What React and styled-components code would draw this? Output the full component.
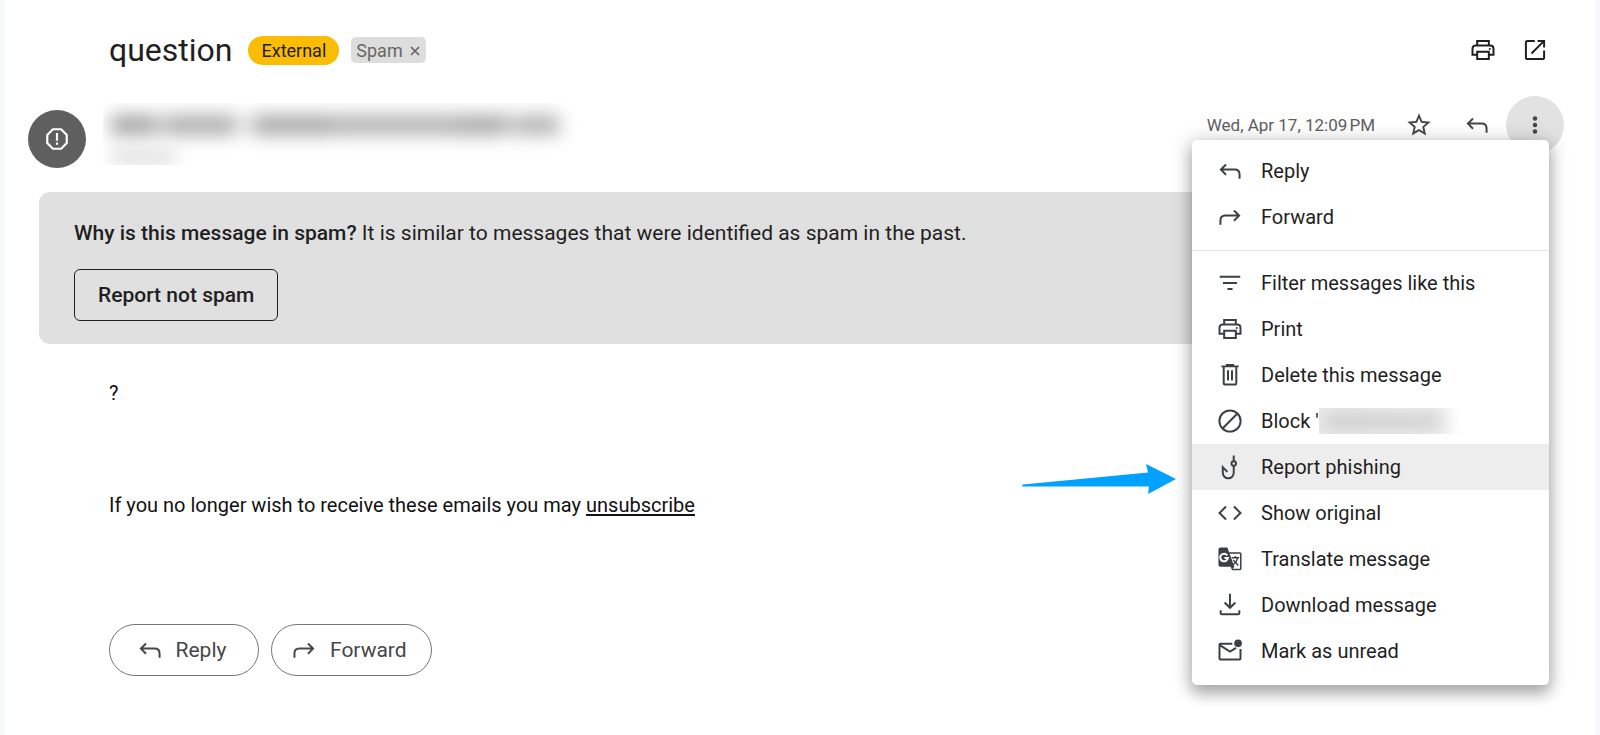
import React from 'react';
import styled, { createGlobalStyle } from 'styled-components';

const GlobalStyle = createGlobalStyle`
  * { box-sizing: border-box; }
  body { margin: 0; background: #f6f8fc; font-family: Roboto, "Liberation Sans", sans-serif; color: #1f1f1f; }
  button { font-family: inherit; color: inherit; background: none; border: 0; padding: 0; cursor: pointer; }
  svg { display: block; flex: none; fill: currentColor; }
`;

const Panel = styled.article`
  min-height: 100vh;
  margin: 0 5px;
  background: #fff;
`;

const SubjectBar = styled.header`
  display: flex;
  align-items: center;
  height: 96px;
  padding: 4px 46px 0 104px;
`;

const Subject = styled.h1`
  margin: 0 16px 0 0;
  font-size: 32px;
  line-height: 40px;
  font-weight: 400;
`;

const Chip = styled.span`
  display: flex;
  align-items: center;
  gap: 7px;
  height: ${(p) => (p.$external ? '29px' : '26px')};
  margin-right: 12px;
  padding: ${(p) => (p.$external ? '0 13px' : '0 6px 0 5px')};
  border-radius: ${(p) => (p.$external ? '15px' : '5px')};
  background: ${(p) => (p.$external ? '#fbbc04' : '#ddd')};
  color: ${(p) => (p.$external ? '#1f1f1f' : '#666')};
  font-size: 18px;
`;

const RemoveButton = styled.button`
  padding-top: 2px;
`;

const Tools = styled.div`
  display: flex;
  gap: 24px;
  margin-left: auto;
`;

const IconButton = styled.button`
  display: grid;
  place-items: center;
  width: ${(p) => p.$size || 28}px;
  height: ${(p) => p.$size || 28}px;
  border-radius: 50%;
  background: ${(p) => (p.$active ? '#e2e2e2' : 'transparent')};
  color: ${(p) => (p.$dark ? '#1f1f1f' : '#444746')};
`;

const SenderRow = styled.section`
  display: flex;
  align-items: flex-start;
  padding: 0 31px 0 23px;
`;

const Avatar = styled.div`
  display: grid;
  place-items: center;
  width: 58px;
  height: 58px;
  margin: 14px 17px 0 0;
  border-radius: 50%;
  background: #5f5f5f;
  color: #fff;
`;

const Redacted = styled.div`
  overflow: hidden;
  display: flex;
  flex-direction: column;
  gap: 16px;
  width: 480px;
  height: 62px;
  margin-top: 7px;
  padding: 12px 8px 0;
`;

const RedactedLine = styled.div`
  display: flex;
  filter: blur(9px);
`;

const Smudge = styled.span`
  width: ${(p) => p.$width}px;
  height: ${(p) => p.$height}px;
  background: ${(p) => p.$tone};
`;

const Meta = styled.div`
  position: relative;
  display: flex;
  align-items: center;
  gap: 30px;
  height: 58px;
  margin-left: auto;
`;

const DateText = styled.time`
  font-size: 17px;
  color: #5e5e5e;
`;

const MoreSlot = styled.div`
  margin-left: -15px;
`;

const Menu = styled.ul`
  position: absolute;
  z-index: 2;
  top: 44px;
  right: 15px;
  width: 357px;
  margin: 0;
  padding: 8px 0 11px;
  list-style: none;
  border-radius: 5px;
  background: #fff;
  box-shadow: 0 8px 14px 1px rgba(0, 0, 0, 0.24), 0 2px 20px 2px rgba(0, 0, 0, 0.18);
`;

const Divider = styled.li`
  height: 1px;
  margin: 10px 0 9px;
  background: #e4e4e4;
`;

const MenuItem = styled.li`
  position: relative;
  background: ${(p) => (p.$active ? '#ededed' : 'transparent')};
`;

const MenuButton = styled.button`
  display: flex;
  align-items: center;
  gap: 17px;
  width: 100%;
  height: 46px;
  padding: 0 24px;
  font-size: 20px;
  text-align: left;
  & > svg { color: #3c4043; }
`;

const MenuLabel = styled.span`
  display: flex;
  align-items: center;
`;

const BlockName = styled.span`
  overflow: hidden;
  width: 142px;
  height: 26px;
  padding: 6px 16px 0 4px;
  background: linear-gradient(90deg, #ececec, #f2f2f2 85%, #fff);
`;

const Pointer = styled.svg`
  position: absolute;
  right: 100%;
  top: 20px;
  margin-right: 16px;
  fill: #00a1ff;
`;

const Banner = styled.section`
  margin: 24px 80px 0 34px;
  padding: 26px 35px 23px;
  border-radius: 11px;
  background: #e0e0e0;
`;

const BannerText = styled.p`
  margin: 0 0 21px;
  font-size: 21px;
  line-height: 30px;
  strong { font-weight: 500; }
`;

const NotSpamButton = styled.button`
  height: 52px;
  padding: 0 23px;
  border: 1px solid #1f1f1f;
  border-radius: 6px;
  font-size: 21px;
  font-weight: 500;
`;

const Body = styled.section`
  padding: 34px 104px 0;
  font-size: 20px;
  line-height: 30px;
  color: #111;
`;

const Paragraph = styled.p`
  margin: 0 0 82px;
`;

const Link = styled.a`
  color: inherit;
  text-underline-offset: 2px;
`;

const Actions = styled.footer`
  display: flex;
  gap: 12px;
  padding: 22px 104px 60px;
`;

const ActionButton = styled.button`
  display: flex;
  align-items: center;
  justify-content: center;
  gap: 12px;
  min-width: 150px;
  height: 52px;
  padding: 0 24px 0 18px;
  border: 1px solid #747775;
  border-radius: 26px;
  color: #444746;
  font-size: 21px;
`;

const Icon = ({ size = 28, children }) => (
  <svg width={size} height={size} viewBox="0 0 24 24" aria-hidden="true">{children}</svg>
);

const stroke = { fill: 'none', stroke: 'currentColor', strokeWidth: 1.7 };

const ReplyIcon = () => (
  <Icon><path {...stroke} d="M8.6 6.4 4.2 10.8 8.6 15.2M4.4 10.8H16Q20.2 10.8 20.2 15V18.6" /></Icon>
);
const ForwardIcon = () => (
  <Icon><path {...stroke} d="M15.4 6.4 19.8 10.8 15.4 15.2M19.6 10.8H8Q3.8 10.8 3.8 15V18.6" /></Icon>
);
const PrintIcon = () => (
  <Icon>
    <path {...stroke} d="M7 8.2V4.2H17V8.2M7 16H3V11Q3 8.2 5.8 8.2H18.2Q21 8.2 21 11V16H17M7 13.4H17V19.8H7Z" />
    <circle cx="17.8" cy="11.2" r="0.9" />
  </Icon>
);
const OpenIcon = () => (
  <Icon><path {...stroke} d="M11.8 4.2H5.6Q4.2 4.2 4.2 5.6V18.4Q4.2 19.8 5.6 19.8H18.4Q19.8 19.8 19.8 18.4V12.4M14.2 4.2H19.8V9.8M19.8 4.2 9 15" /></Icon>
);
const StarIcon = () => (
  <Icon><path d="m22 9.24-7.19-.62L12 2 9.19 8.63 2 9.24l5.46 4.73L5.82 21 12 17.27 18.18 21l-1.63-7.03L22 9.24zM12 15.4l-3.76 2.27 1-4.28-3.32-2.88 4.38-.38L12 6.1l1.71 4.04 4.38.38-3.32 2.88 1 4.28L12 15.4z" /></Icon>
);
const MoreIcon = () => (
  <Icon><circle cx="12" cy="6.4" r="1.9" /><circle cx="12" cy="12" r="1.9" /><circle cx="12" cy="17.6" r="1.9" /></Icon>
);
const SpamIcon = () => (
  <Icon size={26}>
    <path {...stroke} strokeWidth="2" d="M8.2 3H15.8L21 8.2V15.8L15.8 21H8.2L3 15.8V8.2Z" />
    <path d="M11 6.5h2v7h-2zM11 15.2h2v2h-2z" />
  </Icon>
);
const FilterIcon = () => (
  <Icon><path d="M3.2 5.8h17.6v1.8H3.2zM6 11.1h12v1.8H6zM9.8 16.2h4.4v1.8H9.8z" /></Icon>
);
const TrashIcon = () => (
  <Icon><path {...stroke} d="M4.6 4.6H19.4M9.3 4.2V3.4H14.7V4.2M6.6 4.8V18.8Q6.6 20.2 8 20.2H16Q17.4 20.2 17.4 18.8V4.8M10.3 8V16.8M13.7 8V16.8" /></Icon>
);
const BlockIcon = () => (
  <Icon><path {...stroke} d="M5.4 18.6 18.6 5.4" /><circle {...stroke} cx="12" cy="12" r="9.1" /></Icon>
);
const HookIcon = () => (
  <Icon>
    <circle {...stroke} cx="15.2" cy="9" r="1.9" />
    <path {...stroke} d="M15.2 2.2V7.1M15.2 10.9V17A4.2 4.2 0 0 1 5.8 17V12.2L9.8 16.2" />
  </Icon>
);
const CodeIcon = () => (
  <Icon><path {...stroke} d="M8.6 6.4 3 12 8.6 17.6M15.4 6.4 21 12 15.4 17.6" /></Icon>
);
const TranslateIcon = () => (
  <Icon>
    <path d="M3.8 2.2H9.8L11.2 6.2H20.4Q21.9 6.2 21.9 7.7V20.2Q21.9 21.7 20.4 21.7H13.8L12.5 18.6H3.8Q2.1 18.6 2.1 17V3.9Q2.1 2.2 3.8 2.2ZM11.7 7.5 15.7 18.7 14.3 20.4H20.6V7.5Z" fillRule="evenodd" />
    <path {...stroke} stroke="#fff" d="M9.7 8.9A3.3 3.3 0 1 0 10.2 11.2H7.3" />
    <path {...stroke} strokeWidth="1.2" d="M13.4 10.9H19.8M16.6 9.4V10.9M18.6 11.1Q17.8 14.6 14.8 16.8M14.8 12.8 19.2 17.6" />
  </Icon>
);
const DownloadIcon = () => (
  <Icon><path {...stroke} d="M12 2.4V14.2M7.4 9.8 12 14.4 16.6 9.8M4 16.6V19Q4 20 5 20H19Q20 20 20 19V16.6" /></Icon>
);
const UnreadIcon = () => (
  <Icon>
    <path {...stroke} d="M14 5.7H3.8Q3 5.7 3 6.5V18.5Q3 19.3 3.8 19.3H20.2Q21 19.3 21 18.5V10.2M3.2 7 12 12.6 17.2 9.4" />
    <circle cx="18.9" cy="5.4" r="3.3" />
  </Icon>
);
const CloseIcon = () => (
  <svg width="10" height="10" viewBox="0 0 10 10" aria-hidden="true"><path {...stroke} d="M1 1 9 9M9 1 1 9" /></svg>
);

const senderSmudges = [
  { width: 44, tone: '#a4a4a4' },
  { width: 12, tone: '#d0d0d0' },
  { width: 68, tone: '#acacac' },
  { width: 18, tone: '#ececec' },
  { width: 78, tone: '#a8a8a8' },
  { width: 126, tone: '#b2b2b2' },
  { width: 48, tone: '#a8a8a8' },
  { width: 12, tone: '#cccccc' },
  { width: 42, tone: '#b2b2b2' },
];

const quickItems = [
  { label: 'Reply', icon: <ReplyIcon /> },
  { label: 'Forward', icon: <ForwardIcon /> },
];

const messageItems = [
  { label: 'Filter messages like this', icon: <FilterIcon /> },
  { label: 'Print', icon: <PrintIcon /> },
  { label: 'Delete this message', icon: <TrashIcon /> },
  { label: "Block '", icon: <BlockIcon />, hiddenName: true },
  { label: 'Report phishing', icon: <HookIcon />, active: true },
  { label: 'Show original', icon: <CodeIcon /> },
  { label: 'Translate message', icon: <TranslateIcon /> },
  { label: 'Download message', icon: <DownloadIcon /> },
  { label: 'Mark as unread', icon: <UnreadIcon /> },
];

const MenuEntry = ({ label, icon, active, hiddenName }) => (
  <MenuItem $active={active}>
    <MenuButton type="button">
      {icon}
      <MenuLabel>
        {label}
        {hiddenName && (
          <BlockName aria-hidden="true">
            <RedactedLine><Smudge $width={118} $height={15} $tone="#c8c8c8" /></RedactedLine>
          </BlockName>
        )}
      </MenuLabel>
    </MenuButton>
    {active && (
      <Pointer width="154" height="30" viewBox="0 0 154 30" aria-hidden="true">
        <path d="M1 20.5 126 8.5 124 0 154 15 126 30 127 22.5H1Q-1 21.5 1 20.5Z" />
      </Pointer>
    )}
  </MenuItem>
);

export default function App() {
  return (
    <>
      <GlobalStyle />
      <Panel>
        <SubjectBar>
          <Subject>question</Subject>
          <Chip $external>External</Chip>
          <Chip>
            Spam
            <RemoveButton type="button" aria-label="Remove label Spam"><CloseIcon /></RemoveButton>
          </Chip>
          <Tools>
            <IconButton type="button" $dark aria-label="Print all"><PrintIcon /></IconButton>
            <IconButton type="button" $dark aria-label="Open in new window"><OpenIcon /></IconButton>
          </Tools>
        </SubjectBar>

        <SenderRow>
          <Avatar><SpamIcon /></Avatar>
          <Redacted aria-hidden="true">
            <RedactedLine>
              {senderSmudges.map(({ width, tone }, i) => (
                <Smudge key={i} $width={width} $height={20} $tone={tone} />
              ))}
            </RedactedLine>
            <RedactedLine><Smudge $width={64} $height={12} $tone="#d6d6d6" /></RedactedLine>
          </Redacted>
          <Meta>
            <DateText>Wed, Apr 17, 12:09{'\u202f'}PM</DateText>
            <IconButton type="button" aria-label="Star"><StarIcon /></IconButton>
            <IconButton type="button" aria-label="Reply"><ReplyIcon /></IconButton>
            <MoreSlot>
              <IconButton type="button" $size={58} $active aria-label="More" aria-expanded="true"><MoreIcon /></IconButton>
            </MoreSlot>
            <Menu>
              {quickItems.map((item) => <MenuEntry key={item.label} {...item} />)}
              <Divider />
              {messageItems.map((item) => <MenuEntry key={item.label} {...item} />)}
            </Menu>
          </Meta>
        </SenderRow>

        <Banner>
          <BannerText>
            <strong>Why is this message in spam?</strong> It is similar to messages that were identified as spam in the past.
          </BannerText>
          <NotSpamButton type="button">Report not spam</NotSpamButton>
        </Banner>

        <Body>
          <Paragraph>?</Paragraph>
          <Paragraph>
            If you no longer wish to receive these emails you may <Link href="#unsubscribe">unsubscribe</Link>
          </Paragraph>
        </Body>

        <Actions>
          <ActionButton type="button"><ReplyIcon />Reply</ActionButton>
          <ActionButton type="button"><ForwardIcon />Forward</ActionButton>
        </Actions>
      </Panel>
    </>
  );
}
